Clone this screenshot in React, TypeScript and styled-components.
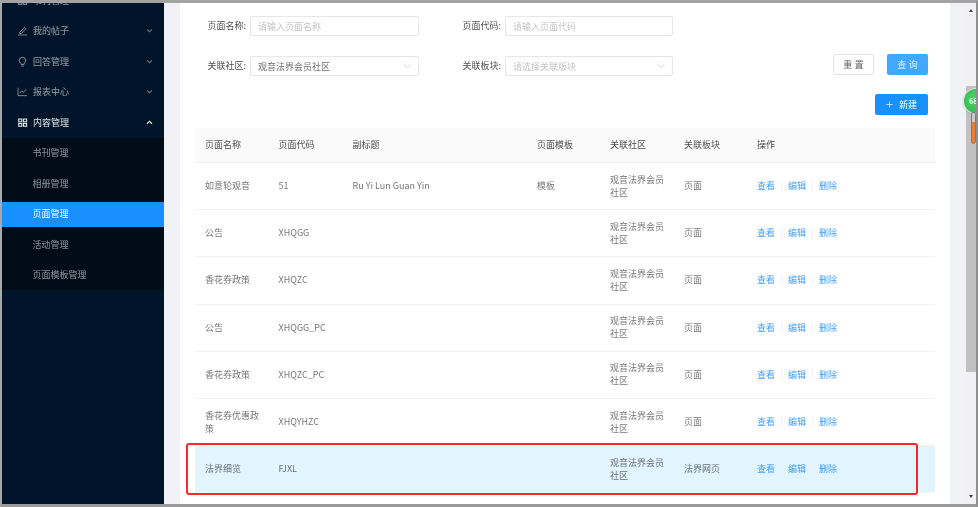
import React from "react";
import styled, { createGlobalStyle } from "styled-components";

const GlobalStyle = createGlobalStyle`
  html, body {
    margin: 0;
    padding: 0;
    background: #fff;
  }
  body {
    font-family: "Noto Sans CJK SC", "Noto Sans", sans-serif;
    font-size: 9px;
  }
`;

const Frame = styled.div`
  position: relative;
  width: 978px;
  height: 507px;
  box-sizing: border-box;
  border-top: 3px solid #a3a3a3;
  border-left: 2px solid #a8a8a8;
  border-right: 2px solid #8f8f8f;
  border-bottom: 3px solid #9a9a9a;
  display: flex;
  overflow: hidden;
  background: #f0f2f5;
  filter: blur(0.45px);
`;

const Sidebar = styled.aside`
  flex: 0 0 162px;
  background: #001529;
  overflow: hidden;
`;

const Menu = styled.ul`
  list-style: none;
  margin: -18px 0 0;
  padding: 0;
`;

const MenuItem = styled.li<{ $open?: boolean }>`
  height: 30.5px;
  display: flex;
  align-items: center;
  padding: 0 9px 0 15px;
  color: ${(p) => (p.$open ? "#dfe3e6" : "rgba(255, 255, 255, 0.56)")};
  font-size: 9px;
  svg.lead {
    width: 11px;
    height: 11px;
    margin-right: 5px;
    flex: none;
  }
  svg.caret {
    width: 7px;
    height: 7px;
    margin-left: auto;
    margin-right: 2px;
    opacity: ${(p) => (p.$open ? 1 : 0.7)};
  }
`;

const SubMenu = styled.ul`
  list-style: none;
  margin: 0;
  padding: 0;
  background: #000c17;
`;

const SubItem = styled.li<{ $active?: boolean }>`
  height: 30.5px;
  display: flex;
  align-items: center;
  padding-left: 30.5px;
  font-size: 9px;
  color: ${(p) => (p.$active ? "#fff" : "rgba(255, 255, 255, 0.54)")};
  background: ${(p) =>
    p.$active
      ? "linear-gradient(#000c17 0, #000c17 3px, #1890ff 3px, #1890ff 28px, #000c17 28px)"
      : "transparent"};
`;

const Main = styled.main`
  flex: 1;
  display: flex;
  padding-left: 16px;
  min-width: 0;
`;

const Card = styled.section`
  flex: 0 0 770px;
  background: #fff;
  padding: 13px 15px 0;
  box-sizing: border-box;
`;

const FilterBar = styled.div`
  display: flex;
  align-items: flex-start;
  height: 61px;
  padding-right: 7px;
`;

const FilterGrid = styled.div`
  display: grid;
  grid-template-columns: 169px 168px;
  column-gap: 86px;
  row-gap: 20px;
  margin-left: 55px;
`;

const Field = styled.label`
  position: relative;
  display: block;
`;

const FieldLabel = styled.span`
  position: absolute;
  right: 100%;
  top: 0;
  height: 20px;
  line-height: 20px;
  padding-right: 4px;
  white-space: nowrap;
  color: rgba(0, 0, 0, 0.72);
  font-size: 9px;
`;

const InputBox = styled.div<{ $filled?: boolean }>`
  height: 20px;
  box-sizing: border-box;
  border: 1px solid #e6e6e6;
  border-radius: 2px;
  padding: 0 7px;
  display: flex;
  align-items: center;
  justify-content: space-between;
  color: ${(p) => (p.$filled ? "rgba(0, 0, 0, 0.6)" : "#c4c4c4")};
  font-size: 9px;
  svg {
    width: 8px;
    height: 8px;
  }
`;

const ButtonGroup = styled.div`
  margin-left: auto;
  margin-top: 38px;
  display: flex;
  gap: 13px;
`;

const Button = styled.button<{ $kind?: "default" | "light" | "primary" }>`
  height: 20.5px;
  min-width: 41px;
  padding: 0;
  box-sizing: border-box;
  border-radius: 2px;
  font-family: inherit;
  font-size: 9px;
  letter-spacing: ${(p) => (p.$kind === "primary" ? "0" : "2.5px")};
  text-indent: ${(p) => (p.$kind === "primary" ? "0" : "2.5px")};
  display: flex;
  align-items: center;
  justify-content: center;
  border: 1px solid ${(p) => (p.$kind === "default" ? "#e4e4e4" : "transparent")};
  color: ${(p) =>
    p.$kind === "default"
      ? "rgba(0, 0, 0, 0.65)"
      : p.$kind === "light"
        ? "rgba(255, 255, 255, 0.8)"
        : "#fff"};
  background: ${(p) =>
    p.$kind === "default" ? "#fff" : p.$kind === "light" ? "#40a9ff" : "#1890ff"};
`;

const TableActions = styled.div`
  display: flex;
  justify-content: flex-end;
  padding: 17px 7px 0 0;
  box-sizing: border-box;
  height: 50.5px;
`;

const NewButton = styled(Button)`
  width: 53px;
  gap: 6px;
  letter-spacing: 0;
  svg {
    width: 7px;
    height: 7px;
  }
`;

const Table = styled.table`
  width: 740px;
  border-collapse: collapse;
  table-layout: fixed;
  font-size: 9px;
  line-height: 13px;
`;

const HeadCell = styled.th`
  height: 34.5px;
  padding: 0 9px 0 10px;
  background: #fafafa;
  border-bottom: 1px solid #eee;
  font-weight: 400;
  text-align: left;
  color: rgba(0, 0, 0, 0.72);
`;

const Row = styled.tr<{ $highlight?: boolean }>`
  background: ${(p) => (p.$highlight ? "#e2f4fe" : "transparent")};
`;

const Cell = styled.td`
  height: 47.2px;
  box-sizing: border-box;
  padding: 0 9px 1px 10px;
  border-bottom: 1px solid #f2f2f2;
  color: rgba(0, 0, 0, 0.56);
  word-break: break-all;
`;

const Actions = styled.div`
  display: flex;
  align-items: center;
  color: #45a1f7;
`;

const ActionDivider = styled.i`
  width: 1px;
  height: 8px;
  background: #eef0f2;
  margin: 0 6px;
`;

const Gutter = styled.div`
  position: relative;
  flex: 1;
  background: #f0f2f5;
`;

const ScrollTrack = styled.div`
  position: absolute;
  top: 0;
  bottom: 0;
  right: 0;
  width: 10px;
  background: #f1f1f3;
`;

const ScrollArrow = styled.span<{ $down?: boolean }>`
  position: absolute;
  left: 3px;
  ${(p) => (p.$down ? "bottom: 6px;" : "top: 6px;")}
  width: 0;
  height: 0;
  border-left: 2.5px solid transparent;
  border-right: 2.5px solid transparent;
  ${(p) => (p.$down ? "border-top: 3px solid #444;" : "border-bottom: 3px solid #444;")}
`;

const ScrollThumb = styled.div`
  position: absolute;
  top: 83px;
  left: 0;
  width: 10px;
  height: 286px;
  background: #c1c1c1;
`;

const Badge = styled.div`
  position: absolute;
  top: 86px;
  left: 962px;
  width: 24px;
  height: 24px;
  border-radius: 50%;
  background: radial-gradient(circle at 50% 40%, #4fd16b, #2fb84f);
  box-shadow: 0 0 0 1px #d6e8d9, 0 1px 3px rgba(0, 0, 0, 0.3);
  color: #e9ffe9;
  font-size: 7px;
  font-weight: 700;
  line-height: 24px;
  text-indent: 5px;
  white-space: nowrap;
`;

const Gauge = styled.div`
  position: absolute;
  top: 109px;
  left: 969px;
  width: 5px;
  height: 32px;
  box-sizing: border-box;
  border: 1px solid #7b7b7b;
  border-radius: 3px;
  background: linear-gradient(#c9c9c9 0, #c9c9c9 9px, #ed7d31 9px);
`;

const Annotation = styled.div`
  position: absolute;
  left: 184px;
  top: 440px;
  width: 732px;
  height: 52px;
  box-sizing: border-box;
  border: 2px solid #f5292c;
  border-radius: 3px;
  pointer-events: none;
`;

const Pencil = () => (
  <svg className="lead" viewBox="0 0 16 16" fill="none" stroke="currentColor" strokeWidth="1.2">
    <path d="M4 10.5 11 3.5l2 2-7 7H4z" />
    <path d="M1.5 14.5h13" />
  </svg>
);

const Bulb = () => (
  <svg className="lead" viewBox="0 0 16 16" fill="none" stroke="currentColor" strokeWidth="1.3">
    <path d="M5.8 10.8C4.3 9.9 3.3 8.4 3.3 6.6a4.7 4.7 0 0 1 9.4 0c0 1.8-1 3.3-2.5 4.2v1.4H5.8z" />
    <path d="M6.2 14.6h3.6" />
  </svg>
);

const ChartLine = () => (
  <svg className="lead" viewBox="0 0 16 16" fill="none" stroke="currentColor" strokeWidth="1.2">
    <path d="M1.5 2.5v11.5h13" />
    <path d="M4 10.5l3-3.5 2.5 2.2L13.5 4.5" />
  </svg>
);

const Grid = () => (
  <svg className="lead" viewBox="0 0 16 16" fill="none" stroke="currentColor" strokeWidth="1.6">
    <rect x="2.5" y="3" width="4.5" height="4" />
    <rect x="9.5" y="3" width="4.5" height="4" />
    <rect x="2.5" y="9.5" width="4.5" height="4" />
    <rect x="9.5" y="9.5" width="4.5" height="4" />
  </svg>
);

const Caret = ({ up }: { up?: boolean }) => (
  <svg className="caret" viewBox="0 0 10 10" fill="none" stroke="currentColor" strokeWidth="1.6">
    <path d={up ? "M1.5 6.8 5 3.3l3.5 3.5" : "M1.5 3.3 5 6.8l3.5-3.5"} />
  </svg>
);

const Chevron = () => (
  <svg viewBox="0 0 12 12" fill="none" stroke="#c8c8c8" strokeWidth="1.1">
    <path d="M1 3.5 6 8.5l5-5" />
  </svg>
);

const Plus = () => (
  <svg viewBox="0 0 10 10" fill="none" stroke="currentColor" strokeWidth="1">
    <path d="M5 .5v9M.5 5h9" />
  </svg>
);

const community = "观音法界会员社区";

const columns = ["页面名称", "页面代码", "副标题", "页面模板", "关联社区", "关联板块", "操作"];
const widths = [73.5, 74, 184.5, 73, 74, 73, 188];

const rows = [
  { name: "如意轮观音", code: "51", sub: "Ru Yi Lun Guan Yin", tpl: "模板", block: "页面" },
  { name: "公告", code: "XHQGG", sub: "", tpl: "", block: "页面" },
  { name: "香花券政策", code: "XHQZC", sub: "", tpl: "", block: "页面" },
  { name: "公告", code: "XHQGG_PC", sub: "", tpl: "", block: "页面" },
  { name: "香花券政策", code: "XHQZC_PC", sub: "", tpl: "", block: "页面" },
  { name: "香花券优惠政策", code: "XHQYHZC", sub: "", tpl: "", block: "页面" },
  { name: "法界细览", code: "FJXL", sub: "", tpl: "", block: "法界网页", highlight: true },
];

export default function App() {
  return (
    <>
      <GlobalStyle />
      <Frame>
        <Sidebar>
          <Menu>
            <MenuItem><Grid />书刊管理<Caret /></MenuItem>
            <MenuItem><Pencil />我的帖子<Caret /></MenuItem>
            <MenuItem><Bulb />回答管理<Caret /></MenuItem>
            <MenuItem><ChartLine />报表中心<Caret /></MenuItem>
            <MenuItem $open><Grid />内容管理<Caret up /></MenuItem>
            <SubMenu>
              <SubItem>书刊管理</SubItem>
              <SubItem>相册管理</SubItem>
              <SubItem $active>页面管理</SubItem>
              <SubItem>活动管理</SubItem>
              <SubItem>页面模板管理</SubItem>
            </SubMenu>
          </Menu>
        </Sidebar>
        <Main>
          <Card>
            <FilterBar>
              <FilterGrid>
                <Field>
                  <FieldLabel>页面名称:</FieldLabel>
                  <InputBox>请输入页面名称</InputBox>
                </Field>
                <Field>
                  <FieldLabel>页面代码:</FieldLabel>
                  <InputBox>请输入页面代码</InputBox>
                </Field>
                <Field>
                  <FieldLabel>关联社区:</FieldLabel>
                  <InputBox $filled>{community}<Chevron /></InputBox>
                </Field>
                <Field>
                  <FieldLabel>关联板块:</FieldLabel>
                  <InputBox>请选择关联版块<Chevron /></InputBox>
                </Field>
              </FilterGrid>
              <ButtonGroup>
                <Button $kind="default">重置</Button>
                <Button $kind="light">查询</Button>
              </ButtonGroup>
            </FilterBar>
            <TableActions>
              <NewButton $kind="primary"><Plus />新建</NewButton>
            </TableActions>
            <Table>
              <colgroup>
                {widths.map((w, i) => (
                  <col key={i} style={{ width: w }} />
                ))}
              </colgroup>
              <thead>
                <tr>
                  {columns.map((c) => (
                    <HeadCell key={c}>{c}</HeadCell>
                  ))}
                </tr>
              </thead>
              <tbody>
                {rows.map((r, i) => (
                  <Row key={i} $highlight={r.highlight}>
                    <Cell>{r.name}</Cell>
                    <Cell>{r.code}</Cell>
                    <Cell>{r.sub}</Cell>
                    <Cell>{r.tpl}</Cell>
                    <Cell>{community}</Cell>
                    <Cell>{r.block}</Cell>
                    <Cell>
                      <Actions>
                        查看<ActionDivider />编辑<ActionDivider />删除
                      </Actions>
                    </Cell>
                  </Row>
                ))}
              </tbody>
            </Table>
          </Card>
          <Gutter>
            <ScrollTrack>
              <ScrollArrow />
              <ScrollThumb />
              <ScrollArrow $down />
            </ScrollTrack>
          </Gutter>
        </Main>
        <Badge>68</Badge>
        <Gauge />
        <Annotation />
      </Frame>
    </>
  );
}
